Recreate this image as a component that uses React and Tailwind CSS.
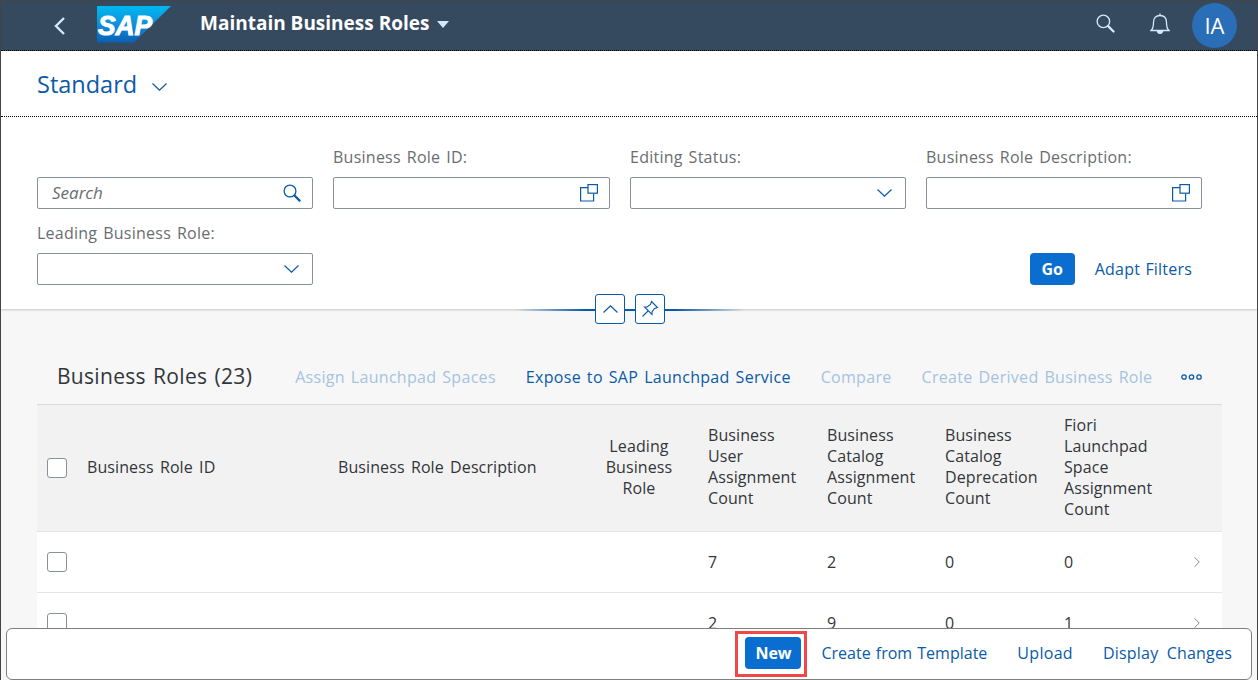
import { ChevronRight } from 'lucide-react'

const HEADERS = [
  { lines: ['Business Role ID'] },
  { lines: ['Business Role Description'] },
  { lines: ['Leading', 'Business', 'Role'], center: true },
  { lines: ['Business', 'User', 'Assignment', 'Count'] },
  { lines: ['Business', 'Catalog', 'Assignment', 'Count'] },
  { lines: ['Business', 'Catalog', 'Deprecation', 'Count'] },
  { lines: ['Fiori', 'Launchpad', 'Space', 'Assignment', 'Count'] },
]

const ROWS = [
  [7, 2, 0, 0],
  [2, 9, 0, 1],
]

const GRID = 'grid grid-cols-[40px_251px_252px_118px_119px_118px_119px_119px_49px]'

function ValueHelpIcon() {
  return (
    <svg width="18" height="18" viewBox="0 0 18 18" fill="none" stroke="#0a5aa8" strokeWidth="1.2">
      <path d="M8 3.6H0.6V17H13.6V9.5" />
      <rect x="8" y="0.6" width="9.4" height="8.6" />
    </svg>
  )
}

function SearchIcon({ size = 18, color = '#0a5aa8' }) {
  return (
    <svg width={size} height={size} viewBox="0 0 18 18" fill="none" stroke={color}>
      <circle cx="7" cy="7" r="5.9" strokeWidth="1.3" />
      <path d="M11.5 11.5L16.6 16.6" strokeWidth="2.2" strokeLinecap="round" />
    </svg>
  )
}

function Chevron({ w = 15, h = 8, color = '#0a5aa8', up = false, sw = 1.2, className = '' }) {
  return (
    <svg className={className} width={w} height={h} viewBox={`0 0 ${w} ${h}`} fill="none" stroke={color} strokeWidth={sw}>
      <path d={up ? `M0.5 ${h - 0.5}L${w / 2} 0.8L${w - 0.5} ${h - 0.5}` : `M0.5 0.5L${w / 2} ${h - 0.8}L${w - 0.5} 0.5`} />
    </svg>
  )
}

function Field({ label, icon, className = '' }) {
  return (
    <div className={`flex flex-col ${className}`}>
      <label className="h-[30px] text-[16px] leading-[20px] text-[#6a6d70] tracking-[0.25px] [word-spacing:1.5px]">{label}</label>
      <div className="h-[32px] border border-[#89919a] rounded-[2px] bg-white flex items-center justify-end pr-[11px]">
        {icon}
      </div>
    </div>
  )
}

function Checkbox() {
  return <div className="w-5 h-5 border border-[#89919a] rounded-[3px] bg-white" />
}

function SapLogo() {
  return (
    <svg width="75" height="37" viewBox="0 0 75 37">
      <defs>
        <linearGradient id="sapBlue" x1="0" y1="0" x2="0" y2="1">
          <stop offset="0" stopColor="#00b8f1" />
          <stop offset="0.5" stopColor="#0f8fdb" />
          <stop offset="1" stopColor="#0a5fb4" />
        </linearGradient>
      </defs>
      <polygon points="0,0 74,0 37,36.5 0,36.5" fill="url(#sapBlue)" />
      <text x="1" y="28.5" fill="#fff" stroke="#fff" strokeWidth="1" fontFamily="'Liberation Sans', sans-serif" fontWeight="700" fontStyle="italic" fontSize="27" textLength="54" lengthAdjust="spacingAndGlyphs">SAP</text>
    </svg>
  )
}

export default function App() {
  return (
    <div className="relative w-[1258px] h-[680px] overflow-hidden bg-[#f7f7f7] border border-[#444] border-b-0 font-['Open_Sans','Liberation_Sans',sans-serif]">
      {/* シェルバー */}
      <div className="h-[50px] bg-[#354a5f] flex items-center border-b border-dotted border-black">
        <svg className="ml-[52px]" width="14" height="18" viewBox="0 0 14 18" fill="none" stroke="#d1e8ff" strokeWidth="2.4">
          <path d="M11 1L3 9L11 17" />
        </svg>
        <div className="ml-[30px] mt-[-2px]"><SapLogo /></div>
        <span className="ml-[28px] mt-[-5px] text-[19px] font-bold text-white">Maintain Business Roles</span>
        <span className="ml-[8px] mt-[-3px] w-0 h-0 border-x-[6.5px] border-x-transparent border-t-[7px] border-t-[#d1e8ff]" />
        <div className="ml-auto mt-[-4px]"><SearchIcon size={19} color="#d1e8ff" /></div>
        <svg className="ml-[35px] mt-[-3px]" width="20" height="22" viewBox="0 0 20 22" fill="none" stroke="#d1e8ff" strokeWidth="1.3">
          <path d="M1 17.5C3.5 15.5 3.5 13 3.5 9.5C3.5 5 6 2.5 10 2.5C14 2.5 16.5 5 16.5 9.5C16.5 13 16.5 15.5 19 17.5Z" />
          <path d="M10 0.5V2.5" />
          <path d="M7.5 18.5C8 21 12 21 12.5 18.5Z" fill="#d1e8ff" />
        </svg>
        <div className="ml-[22px] mr-[20px] w-[45px] h-[45px] rounded-full bg-[#2a6eb7] flex items-center justify-center text-white text-[22px]">IA</div>
      </div>

      {/* バリアント */}
      <div className="h-[66px] bg-white flex items-center pl-[36px] border-b border-dotted border-black">
        <span className="mt-[2px] text-[23.5px] text-[#0a5aa8]">Standard</span>
        <Chevron className="ml-[15px] mt-[7px]" />
      </div>

      {/* フィルター */}
      <div className="relative h-[192px] bg-white shadow-[0_1px_2px_rgba(0,0,0,0.2)] px-[36px] pt-[30px]">
        <div className="grid grid-cols-[276px_277px_276px_276px] gap-x-[20px]">
          <div className="flex flex-col justify-end">
            <div className="h-[32px] border border-[#89919a] rounded-[2px] flex items-center justify-between pl-[14px] pr-[11px]">
              <span className="italic text-[17px] text-[#6a6d70]">Search</span>
              <SearchIcon />
            </div>
          </div>
          <Field label="Business Role ID:" icon={<ValueHelpIcon />} />
          <Field label="Editing Status:" icon={<Chevron className="mr-[2px]" />} />
          <Field label="Business Role Description:" icon={<ValueHelpIcon />} />
        </div>
        <div className="mt-[14px] flex items-end">
          <Field className="w-[276px]" label="Leading Business Role:" icon={<Chevron className="mr-[2px]" />} />
          <div className="ml-auto flex items-center mr-[29px]">
            <button className="w-[45px] h-[32px] rounded-[4px] bg-[#0a6ed1] text-white font-bold text-[16px]">Go</button>
            <span className="ml-[20px] text-[16px] text-[#0a5aa8] tracking-[0.2px] [word-spacing:1px]">Adapt Filters</span>
          </div>
        </div>

        {/* 折りたたみボタン */}
        <div className="absolute left-[514px] bottom-[-2px] w-[230px] h-[2px] bg-[linear-gradient(90deg,transparent,#0a5aa8_30%,#0a5aa8_70%,transparent)]" />
        <div className="absolute left-[594px] bottom-[-15px] flex gap-[10px]">
          <div className="w-[30px] h-[30px] bg-white border border-[#0a5aa8] rounded-[3px] flex items-center justify-center">
            <Chevron up />
          </div>
          <div className="w-[30px] h-[30px] bg-white border border-[#0a5aa8] rounded-[3px] flex items-center justify-center">
            <svg width="18" height="18" viewBox="0 0 18 18" fill="none" stroke="#0a5aa8" strokeWidth="1.1">
              <path d="M10.5 1.5L16.5 7.5L13.5 8.5L11 12V14.5L3.5 7H6L9.5 4.5Z" />
              <path d="M7 11L1.5 16.5" />
            </svg>
          </div>
        </div>
      </div>

      {/* テーブル */}
      <div className="ml-[36px] w-[1185px] mt-[41px]">
        <div className="h-[55px] flex items-center pl-[20px] pr-[20px] text-[16px] border-b border-[#d9d9d9] tracking-[0.3px] [word-spacing:1.5px]">
          <span className="text-[21px] text-[#32363a]">Business Roles (23)</span>
          <span className="ml-[43px] text-[#a5c3e0]">Assign Launchpad Spaces</span>
          <span className="ml-[30px] text-[#0a5aa8]">Expose to SAP Launchpad Service</span>
          <span className="ml-[30px] text-[#a5c3e0]">Compare</span>
          <span className="ml-[30px] text-[#a5c3e0]">Create Derived Business Role</span>
          <svg className="ml-auto" width="21" height="6" viewBox="0 0 21 6" fill="none" stroke="#0a5aa8" strokeWidth="1.3">
            <circle cx="3" cy="3" r="2.2" />
            <circle cx="10.5" cy="3" r="2.2" />
            <circle cx="18" cy="3" r="2.2" />
          </svg>
        </div>
        <div className={`${GRID} h-[127px] pb-[2px] items-center bg-[#f2f2f2] border-b border-[#e5e5e5] text-[16px] leading-[21px] text-[#32363a] tracking-[0.1px] [word-spacing:2px]`}>
          <div className="pl-[10px] pt-[2px]"><Checkbox /></div>
          {HEADERS.map((h, i) => (
            <div key={i} className={h.center ? 'text-center' : 'pl-[10px]'}>
              {h.lines.map(l => <div key={l}>{l}</div>)}
            </div>
          ))}
        </div>
        {ROWS.map((row, r) => (
          <div key={r} className={`${GRID} h-[61px] items-center bg-white border-b border-[#e5e5e5] text-[16px] text-[#32363a]`}>
            <div className="pl-[10px]"><Checkbox /></div>
            <div />
            <div />
            <div />
            {row.map((v, i) => <div key={i} className="pl-[10px]">{v}</div>)}
            <ChevronRight className="w-[18px] h-[18px] text-[#6a6d70] ml-[15px]" strokeWidth={1.1} />
          </div>
        ))}
      </div>

      {/* フッター */}
      <div className="absolute left-[5px] right-[5px] top-[627px] h-[52px] bg-white border border-[#7f7f7f] rounded-[6px] flex items-center justify-end pr-[19px] pb-[2px] text-[16px] text-[#0a5aa8]">
        <button className="relative w-[56px] h-[32px] rounded-[4px] bg-[#0a6ed1] text-white font-bold text-[16px] mr-[20px]">
          New
          <span className="absolute -left-[10px] -right-[6px] -top-[6px] -bottom-[8px] border-[3px] border-[#f04848]" />
        </button>
        <span className="[word-spacing:1px]">Create from Template</span>
        <span className="ml-[30px] tracking-[0.3px]">Upload</span>
        <span className="ml-[30px] tracking-[0.2px] [word-spacing:4px]">Display Changes</span>
      </div>
    </div>
  )
}
